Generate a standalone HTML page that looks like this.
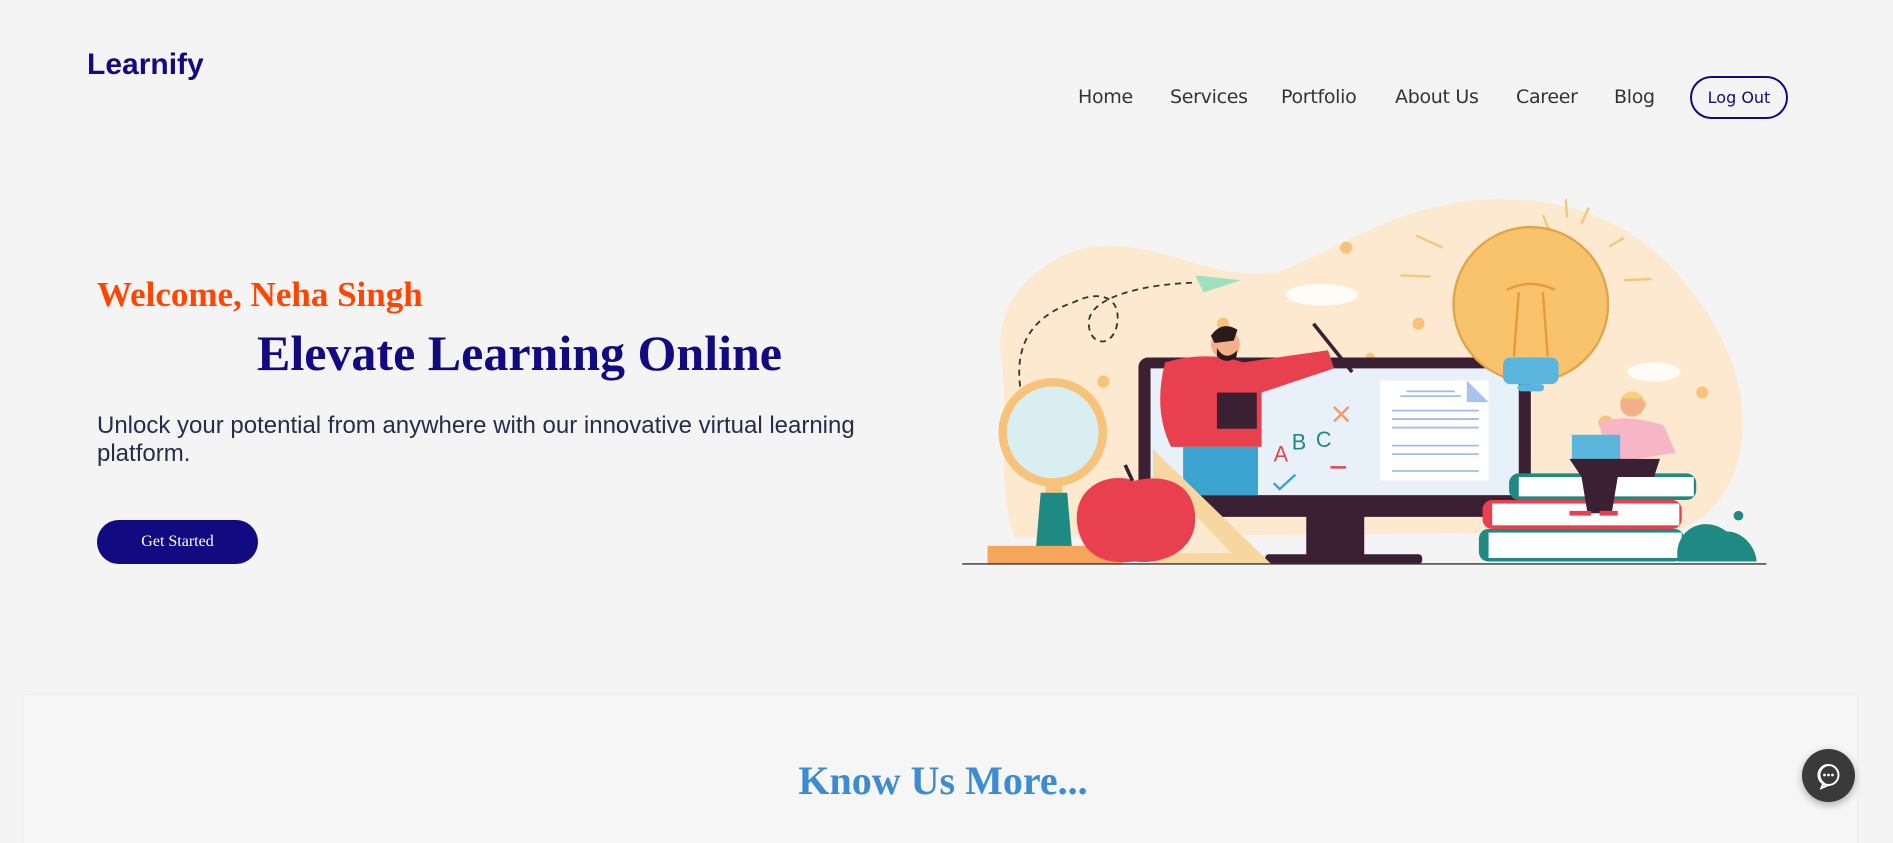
<!DOCTYPE html>
<html><head><meta charset="utf-8"><style>
*{margin:0;padding:0;box-sizing:border-box}
html,body{width:1893px;height:843px;overflow:hidden;background:#f4f4f4;position:relative;font-family:"Liberation Sans",sans-serif}
.abs{position:absolute;white-space:nowrap}
.logo{left:87px;top:48px;font-size:30px;font-weight:bold;color:#120a80}
.nav{top:86px;color:#333;font-family:"DejaVu Sans","Liberation Sans",sans-serif;font-size:19px;letter-spacing:-0.3px}
.btn-out{left:1690px;top:76px;width:98px;height:43px;border:2px solid #120a80;border-radius:22px;color:#120a80;text-align:center;line-height:39px;font-family:"DejaVu Sans",sans-serif;font-size:16px}
.welcome{left:97px;top:275px;font-family:"Liberation Serif",serif;font-weight:bold;font-size:35px;color:#ff4500}
.elev{left:257px;top:324px;font-family:"Liberation Serif",serif;font-weight:bold;font-size:50px;color:#120a80}
.para{left:97px;top:412px;width:780px;font-size:24px;line-height:28px;color:#2a2a4a;white-space:normal}
.gs{left:97px;top:520px;width:161px;height:44px;border-radius:22px;background:#120a80;color:#fff;font-family:"Liberation Serif",serif;font-size:16px;text-align:center;line-height:44px}
.sec{left:24px;top:695px;width:1833px;height:160px;background:#f6f6f6;box-shadow:0 0 4px rgba(0,0,0,.04)}
.know{left:0;width:1886px;top:757px;text-align:center;font-family:"Liberation Serif",serif;font-weight:bold;font-size:40px;color:#3d8bd0}
.chat{left:1802px;top:749px;width:53px;height:53px;border-radius:50%;background:#3a3a3a;box-shadow:0 3px 8px rgba(0,0,0,.3)}
</style></head><body>
<div class="abs logo">Learnify</div>
<div class="abs nav" style="left:1078px">Home</div>
<div class="abs nav" style="left:1170px">Services</div>
<div class="abs nav" style="left:1281px">Portfolio</div>
<div class="abs nav" style="left:1395px">About Us</div>
<div class="abs nav" style="left:1516px">Career</div>
<div class="abs nav" style="left:1614px">Blog</div>
<div class="abs btn-out">Log Out</div>
<div class="abs welcome">Welcome, Neha Singh</div>
<div class="abs elev">Elevate Learning Online</div>
<div class="abs para">Unlock your potential from anywhere with our innovative virtual learning platform.</div>
<div class="abs gs">Get Started</div>
<div class="abs sec"></div>
<div class="abs know">Know Us More...</div>
<div class="abs chat"><svg width="53" height="53" viewBox="0 0 53 53"><path d="M26.5 16a10 10 0 1 0 0 20h0l-7 3 2-5a10 10 0 0 1 5-18z" fill="none" stroke="#fff" stroke-width="2"/><circle cx="26.5" cy="26" r="10" fill="none" stroke="#fff" stroke-width="2"/><circle cx="22.5" cy="26" r="1.4" fill="#fff"/><circle cx="26.5" cy="26" r="1.4" fill="#fff"/><circle cx="30.5" cy="26" r="1.4" fill="#fff"/></svg></div>
<svg class="abs" style="left:0;top:0" width="1893" height="843" viewBox="0 0 1568 698">
<path d="M830 300C820 250 860 215 900 205C960 195 1000 235 1060 225C1120 200 1160 170 1230 165C1300 162 1360 185 1400 240C1440 290 1450 340 1440 380C1430 420 1400 440 1380 440L840 445C825 400 835 340 830 300Z" fill="#fde9cf"/>
<path d="M845 320C840 280 860 260 890 250C910 240 930 245 925 270C920 290 900 285 902 265C905 245 950 235 990 234" fill="none" stroke="#333" stroke-width="1.5" stroke-dasharray="5 4"/>
<path d="M990 228L1028 232L997 242Z" fill="#9fe0c0"/>
<ellipse cx="1095" cy="244" rx="30" ry="9" fill="#fff" opacity=".8"/>
<ellipse cx="1370" cy="308" rx="22" ry="8" fill="#fff" opacity=".8"/>
<g fill="#f7c27a"><circle cx="1115" cy="205" r="5"/><circle cx="1013" cy="268" r="5"/><circle cx="1175" cy="268" r="5"/><circle cx="1135" cy="296" r="4"/><circle cx="914" cy="316" r="5"/><circle cx="1330" cy="350" r="6"/><circle cx="1410" cy="325" r="5"/><circle cx="1360" cy="335" r="4"/></g>
<g stroke="#f3c77e" stroke-width="2"><path d="M1297 165L1298 180M1310 185L1316 172M1333 204L1345 197M1345 232L1368 231M1160 228L1185 229M1173 195L1195 205M1278 178L1283 190"/></g>
<rect x="943" y="296" width="325" height="132" rx="8" fill="#3b1f33"/>
<rect x="953" y="305" width="305" height="105" fill="#e8f0fa"/>
<rect x="1082" y="426" width="48" height="36" fill="#3b1f33"/>
<rect x="1048" y="459" width="130" height="8" rx="3" fill="#3b1f33"/>
<rect x="1143" y="315" width="90" height="83" fill="#fff"/>
<path d="M1215 315L1233 333L1215 333Z" fill="#a8c4ec"/>
<g stroke="#a6bde0" stroke-width="1.5"><path d="M1165 324H1205M1160 328H1210M1153 340H1225M1153 347H1225M1153 354H1225M1153 369H1225M1153 376H1225M1153 390H1225"/></g>
<text x="1055" y="382" font-family="Liberation Sans" font-size="18" fill="#e04a4a">A</text>
<text x="1070" y="372" font-family="Liberation Sans" font-size="18" fill="#1f8a83">B</text>
<text x="1090" y="370" font-family="Liberation Sans" font-size="18" fill="#1f8a83">C</text>
<path d="M1105 337L1117 349M1117 337L1105 349" stroke="#f39a6a" stroke-width="2"/>
<path d="M1055 400L1060 405L1073 393" stroke="#3ba3d0" stroke-width="2" fill="none"/>
<path d="M1102 387H1115" stroke="#e04a4a" stroke-width="2"/>
<path d="M1088 268L1120 308" stroke="#3b1f33" stroke-width="3"/>
<path d="M965 300Q1000 290 1030 300L1100 290L1105 305L1045 325L1045 370L970 370Q955 340 965 300Z" fill="#e8404f"/>
<rect x="980" y="370" width="62" height="40" fill="#3ba3d0"/>
<rect x="1008" y="325" width="33" height="30" fill="#3b1f33"/>
<circle cx="1015" cy="285" r="12" fill="#f3b08a"/>
<path d="M1003 278Q1012 265 1025 273L1022 282L1006 284Z" fill="#2b1a1a"/>
<path d="M1008 288Q1015 300 1025 290L1024 296Q1015 302 1008 295Z" fill="#2b1a1a"/>
<circle cx="872" cy="358" r="45" fill="#f7c27a"/>
<circle cx="872" cy="358" r="38" fill="#d8eef0"/>
<rect x="866" y="400" width="14" height="8" fill="#f7c27a"/>
<path d="M862 408H884L888 455H858Z" fill="#1f8a83"/>
<rect x="818" y="452" width="112" height="15" fill="#f5a65a"/>
<path d="M955 372L955 467L1053 467Z" fill="#f7d6a0"/>
<path d="M965 400L965 458L1020 458Z" fill="#fde9cf"/>
<path d="M940 398C915 390 890 405 892 432C895 460 915 468 940 465C965 468 990 455 990 430C990 400 965 392 940 398Z" fill="#e8404f"/>
<path d="M938 398L932 385" stroke="#3b1f33" stroke-width="3"/>
<circle cx="1268" cy="252" r="64" fill="#f9c36b" stroke="#e0a64e" stroke-width="2"/>
<path d="M1236 290L1300 290L1292 300L1244 300Z" fill="#f9c36b"/>
<path d="M1248 240Q1268 230 1288 240M1258 242L1254 295M1278 242L1282 295" stroke="#e89a3a" stroke-width="2" fill="none"/>
<rect x="1245" y="296" width="46" height="22" rx="6" fill="#5ab6dc"/>
<rect x="1257" y="318" width="22" height="6" rx="3" fill="#5ab6dc"/>
<rect x="1250" y="392" width="155" height="22" rx="8" fill="#1f8a83"/><rect x="1258" y="395" width="145" height="16" fill="#fff"/>
<rect x="1228" y="414" width="165" height="24" rx="8" fill="#e8404f"/><rect x="1236" y="417" width="155" height="18" fill="#fff"/>
<rect x="1225" y="438" width="170" height="27" rx="8" fill="#1f8a83"/><rect x="1233" y="441" width="160" height="21" fill="#fff"/>
<path d="M1390 465C1385 440 1410 425 1430 440C1445 440 1455 455 1455 465Z" fill="#1f8a83"/>
<circle cx="1440" cy="427" r="4" fill="#1f8a83"/>
<path d="M1325 350Q1345 342 1378 352L1388 375L1355 380L1330 385Z" fill="#f7b6c6"/>
<circle cx="1352" cy="335" r="10" fill="#f3b08a"/><path d="M1342 330Q1352 318 1362 330Z" fill="#f5d27a"/>
<rect x="1302" y="360" width="40" height="22" fill="#5ab6dc"/>
<path d="M1300 380H1375L1370 395H1340L1335 425H1315L1310 395Z" fill="#3b1f33"/>
<path d="M1300 425H1318M1325 425H1340" stroke="#e8404f" stroke-width="4"/>
<path d="M797 467H1463" stroke="#333" stroke-width="1.2"/>
</svg>
</body></html>
